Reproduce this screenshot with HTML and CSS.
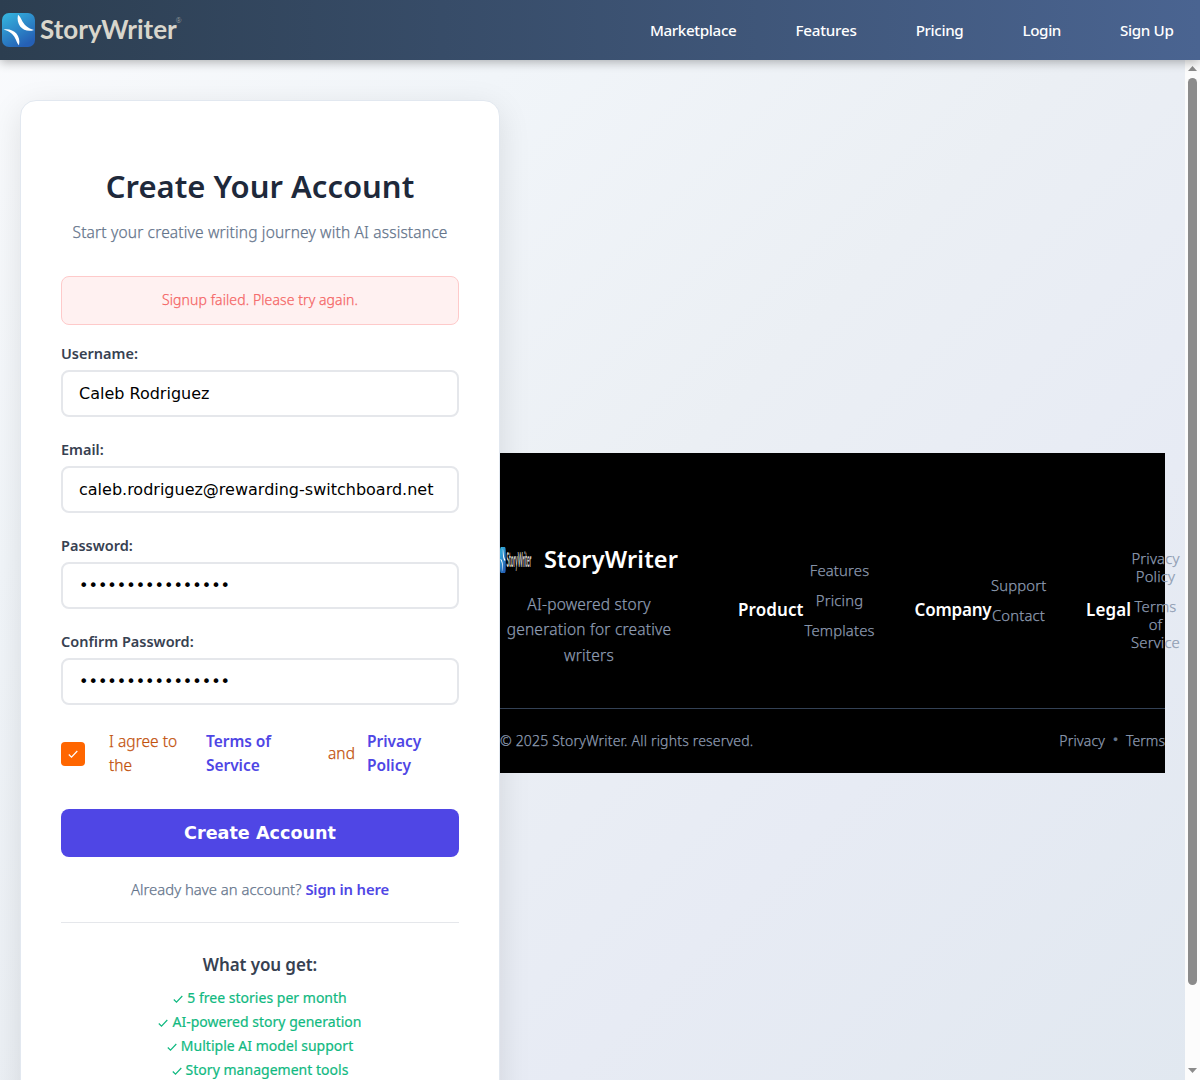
FILE: index.html
```html
<!DOCTYPE html>
<html lang="en">
<head>
<meta charset="utf-8">
<title>StoryWriter - Create Your Account</title>
<link rel="stylesheet" href="styles.css">
</head>
<body>
<svg class="defs" width="0" height="0" aria-hidden="true">
  <defs>
    <linearGradient id="tile" x1="0" y1="0" x2="0.6" y2="1"><stop offset="0" stop-color="#35b8e0"/><stop offset="1" stop-color="#2560b5"/></linearGradient>
    <symbol id="mark" viewBox="0 0 33 34" preserveAspectRatio="none">
      <rect width="33" height="34" rx="7" fill="url(#tile)"/>
      <path d="M16 1.800C20.500 5 19.500 13.500 32 17C23 20.300 13.500 13.500 16 1.800Z" fill="#fff"/>
      <path d="M1.500 16.500C10 14.500 19.500 21 17 32.300C13.500 29 14.500 20 1.500 16.500Z" fill="#fff"/>
    </symbol>
    <symbol id="tick" viewBox="0 0 10 10"><path d="M0.800 5.500L3.500 8.200L9.300 2" fill="none" stroke="currentColor" stroke-width="1.200"/></symbol>
  </defs>
</svg>
<header class="topbar">
  <a class="logo"><svg class="logo-mark"><use href="#mark"/></svg><span class="logo-name">StoryWriter</span><span class="logo-reg">®</span></a>
  <nav class="nav">
    <a>Marketplace</a><a class="nav-features">Features</a><a>Pricing</a><a>Login</a><a>Sign Up</a>
  </nav>
</header>
<div class="viewport">
  <main class="page">
    <section class="card">
      <h1 class="title">Create Your Account</h1>
      <p class="subtitle">Start your creative writing journey with AI assistance</p>
      <div class="error">Signup failed. Please try again.</div>
      <form class="form">
        <label class="label" for="username">Username:</label>
        <input class="input" id="username" type="text" value="Caleb Rodriguez">
        <label class="label" for="email">Email:</label>
        <input class="input" id="email" type="text" value="caleb.rodriguez@rewarding-switchboard.net">
        <label class="label" for="password">Password:</label>
        <input class="input" id="password" type="password" value="storywriter12345">
        <label class="label" for="confirm">Confirm Password:</label>
        <input class="input" id="confirm" type="password" value="storywriter12345">
        <div class="agree">
          <span class="checkbox"><svg width="10" height="10"><use href="#tick"/></svg></span>
          <span class="agree-text">I agree to<br>the</span>
          <a class="agree-terms">Terms of<br>Service</a>
          <span class="agree-and">and</span>
          <a>Privacy<br>Policy</a>
        </div>
        <button class="submit" type="button">Create Account</button>
      </form>
      <p class="signin">Already have an account? <a>Sign in here</a></p>
      <div class="perks">
        <h2 class="perks-title">What you get:</h2>
        <ul class="perks-list">
          <li><svg><use href="#tick"/></svg>5 free stories per month</li>
          <li><svg><use href="#tick"/></svg>AI-powered story generation</li>
          <li><svg><use href="#tick"/></svg>Multiple AI model support</li>
          <li><svg><use href="#tick"/></svg>Story management tools</li>
        </ul>
      </div>
    </section>
    <footer class="footer">
      <div class="footer-main">
        <div class="brand">
          <div class="brand-head">
            <svg class="brand-logo" viewBox="0 0 180 34" preserveAspectRatio="none"><use href="#mark" width="33" height="34"/><text x="37" y="26" class="brand-logo-text">StoryWriter</text></svg>
            <span class="brand-name">StoryWriter</span>
          </div>
          <p class="brand-text">AI-powered story<br>generation for creative<br>writers</p>
        </div>
        <div class="col col-product"><h3>Product</h3><ul><li>Features</li><li>Pricing</li><li>Templates</li></ul></div>
        <div class="col col-company"><h3>Company</h3><ul><li>Support</li><li>Contact</li></ul></div>
        <div class="col col-legal"><h3>Legal</h3><ul><li>Privacy<br>Policy</li><li>Terms<br>of<br>Service</li></ul></div>
      </div>
      <div class="footer-bottom">
        <span>© 2025 StoryWriter. All rights reserved.</span>
        <span class="footer-links"><a>Privacy</a><span class="dot">•</span><a class="terms">Terms</a></span>
      </div>
    </footer>
  </main>
  <div class="scrollbar">
    <svg width="9" height="5"><path d="M0 5L4.500 0L9 5Z"/></svg>
    <span class="thumb"></span>
    <svg width="9" height="5"><path d="M0 0L4.500 5L9 0Z"/></svg>
  </div>
</div>
</body>
</html>
```
FILE: styles.css
```css
* { box-sizing: border-box; }
body {
  margin: 0;
  height: 1080px;
  overflow: hidden;
  display: flex;
  flex-direction: column;
  font-family: "Noto Sans", "Open Sans", sans-serif;
  font-weight: 300;
  white-space: nowrap;
  background: linear-gradient(135deg, #fafbfd 0%, #f1f5f9 25%, #ebeff4 50%, #e7ebf4 72%, #e1e8f0 100%);
}
h1, h2, h3, p, ul { margin: 0; padding: 0; }
ul { list-style: none; }
.defs { position: absolute; }
.subtitle, .error, .agree-text, .agree-and, .signin, .brand-text, .col ul, .footer-bottom { -webkit-text-stroke: 0.250px currentColor; }
.signin a { -webkit-text-stroke: 0; }

.topbar {
  height: 60px;
  flex: none;
  display: flex;
  align-items: center;
  justify-content: space-between;
  padding: 0 27px 0 2px;
  background: linear-gradient(90deg, #2c3e50, #4a6491);
  box-shadow: 0 2px 10px rgba(0, 0, 0, 0.3);
  position: relative;
}
.logo { display: flex; align-items: center; height: 60px; }
.logo-mark { width: 33px; height: 34px; }
.logo-name {
  margin-left: 5px;
  font: 700 26px/34px Lato, sans-serif;
  letter-spacing: 0;
  color: #d9d6cc;
  padding-bottom: 3px;
}
.logo-reg { font-size: 7px; color: #a5a8a6; padding-bottom: 20px; margin-left: -1px; }
.nav { display: flex; gap: 59px; font-size: 15.200px; font-weight: 500; color: #fff; letter-spacing: -0.360px; line-height: 20px; margin-right: -0.500px; }
.nav-features { letter-spacing: -0.220px; }

.viewport { height: 1020px; display: flex; justify-content: space-between; overflow: hidden; }
.page { width: 1165px; height: 1106px; padding: 40px 0 40px 20px; display: flex; align-items: center; }

.card {
  width: 480px;
  height: 1026px;
  flex: none;
  padding: 63px 40px 0;
  background: #fff;
  border: 1px solid #e2e8f0;
  border-radius: 16px;
  box-shadow: 0 8px 32px rgba(0, 0, 0, 0.1);
}
.title { font-size: 31px; font-weight: 600; line-height: 44px; color: #1e293b; text-align: center; }
.subtitle { margin-top: 12px; font-size: 15.500px; line-height: 24px; letter-spacing: 0.170px; color: #64748b; text-align: center; }
.error {
  margin-top: 32px;
  height: 49px;
  line-height: 45px;
  font-size: 14px;
  letter-spacing: 0.090px;
  text-align: center;
  color: #f56565;
  background: #fff1f1;
  border: 1px solid #fecaca;
  border-radius: 8px;
}
.form { display: flex; flex-direction: column; margin-top: 19px; }
.label { font-size: 14.500px; font-weight: 600; line-height: 18px; height: 18px; margin-bottom: 8px; color: #374151; }
.input {
  height: 47px;
  margin: 0 0 23px;
  padding: 12px 16px;
  font: 16px "DejaVu Sans", sans-serif;
  color: #000;
  background: #fff;
  border: 2px solid #e5e7eb;
  border-radius: 8px;
}
.agree { height: 48px; margin-top: 1px; display: flex; align-items: center; font-size: 15.500px; line-height: 24px; letter-spacing: 0.050px; color: #c2510c; }
.agree a { color: #4f46e5; font-weight: 600; letter-spacing: -0.050px; }
.checkbox { width: 24px; height: 24px; margin-top: 2px; display: flex; align-items: center; justify-content: center; border-radius: 4px; background: #f60; color: #fff; }
.agree-text { width: 97px; margin-left: 24px; }
.agree-terms { width: 122px; }
.agree-and { width: 39px; }
.submit {
  height: 48px;
  margin: 32px 0 0;
  border: 0;
  border-radius: 8px;
  background: #4f46e5;
  color: #fff;
  font: 700 17.600px "DejaVu Sans", sans-serif;
}
.signin { margin-top: 20px; font-size: 14.800px; line-height: 24px; letter-spacing: 0.030px; text-align: center; color: #64748b; }
.signin a { color: #4f46e5; font-weight: 600; letter-spacing: -0.140px; }
.perks { margin-top: 21px; padding-top: 30px; border-top: 1px solid #e5e7eb; text-align: center; }
.perks-title { font-size: 17px; font-weight: 600; letter-spacing: -0.100px; line-height: 24px; color: #374151; margin-bottom: 9px; }
.perks-list { font-size: 14px; font-weight: 400; line-height: 24px; letter-spacing: 0.020px; color: #10b981; -webkit-text-stroke: 0.200px currentColor; }
.perks-list svg { width: 10px; height: 10px; margin-right: 4px; vertical-align: -1px; }

.footer { width: 665px; height: 320px; flex: none; background: #000; color: #8e9cb2; }
.footer-main { height: 256px; padding-top: 50px; display: flex; align-items: center; border-bottom: 1px solid #334155; }
.brand { width: 178px; display: flex; flex-direction: column; align-items: center; }
.brand-head { display: flex; align-items: center; gap: 12px; height: 36px; }
.brand-logo { width: 32px; height: 26px; }
.brand-logo-text { font: 700 26.500px Lato, sans-serif; fill: #d9d6cc; }
.brand-name { font-size: 23.500px; font-weight: 600; letter-spacing: 0.150px; color: #fff; line-height: 36px; padding-bottom: 2px; }
.brand-text { margin-top: 13.500px; font-size: 15.500px; line-height: 25.600px; letter-spacing: 0.210px; text-align: center; }
.col { display: flex; align-items: center; font-size: 14.800px; line-height: 18px; letter-spacing: 0.180px; text-align: center; }
.col h3 { font-size: 17px; font-weight: 600; line-height: 24px; letter-spacing: 0.100px; color: #fff; text-align: left; padding-top: 8px; }
.col li { margin-bottom: 12px; }
.col-product { margin-left: 60px; }
.col-product h3 { width: 66px; }
.col-product ul { width: 71px; }
.col-company { margin-left: 39.500px; }
.col-company h3 { width: 76.500px; letter-spacing: -0.220px; }
.col-company ul { width: 55px; }
.col-legal { margin-left: 40px; }
.col-legal h3 { width: 45px; }
.col-legal ul { width: 49px; }
.footer-bottom { height: 62px; display: flex; align-items: center; justify-content: space-between; font-size: 14px; letter-spacing: 0.190px; }
.footer-links { display: flex; align-items: center; }
.dot { width: 21px; text-align: center; font: 12px "DejaVu Sans", sans-serif; color: #64748b; }
.terms { letter-spacing: 0.040px; }

.scrollbar { width: 15px; height: 1020px; padding: 6px 3px 7px; display: flex; flex-direction: column; align-items: center; background: #fcfcfc; }
.scrollbar svg { fill: #8b8b8b; display: block; flex: none; }
.thumb { width: 9px; height: 907px; margin: 7px 0 auto; border-radius: 5px; background: #8b8b8b; }
```
